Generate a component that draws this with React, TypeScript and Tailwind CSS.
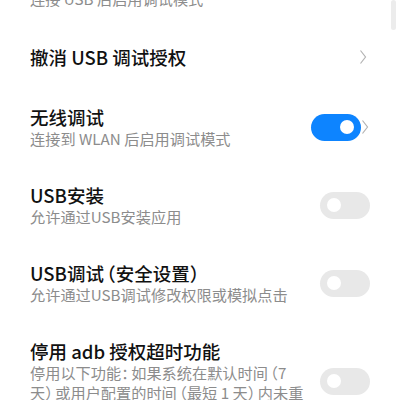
import { ReactNode } from "react"

const font = { fontFamily: '"Noto Sans CJK SC", "Noto Sans", sans-serif' }

// narrow full-width punctuation, like the phone font does
function Open({ ch }: { ch: string }) {
  return <span className="[font-feature-settings:'halt'] ml-[2.5px]">{ch}</span>
}

function Close({ ch }: { ch: string }) {
  return <span className="[font-feature-settings:'halt'] mr-[2.5px]">{ch}</span>
}

function Chevron() {
  return (
    <svg width="8" height="16" viewBox="0 0 8 16" className="shrink-0">
      <polyline points="1.5,1.5 6.5,8 1.5,14.5" fill="none" stroke="#b3b3b3" strokeWidth="1.2" />
    </svg>
  )
}

function Toggle({ on }: { on: boolean }) {
  return (
    <div
      className={
        on
          ? "w-[50px] h-[27px] rounded-full bg-[#0d84ff] flex items-center justify-end pr-[7px] shrink-0"
          : "w-[50px] h-[27px] rounded-full bg-[#e8e8e8] flex items-center justify-start pl-[7px] shrink-0"
      }
    >
      <div className="w-[14px] h-[14px] rounded-full bg-white" />
    </div>
  )
}

interface RowProps {
  title?: ReactNode
  sub?: ReactNode
  right?: ReactNode
  className?: string
}

function Row({ title, sub, right, className }: RowProps) {
  return (
    <div className={"flex items-center pl-[30px] " + (className ?? "")}>
      <div className="flex-1 min-w-0">
        {title && <div className="text-[18.5px] leading-[22px] font-medium text-[#111]">{title}</div>}
        {sub && <div className="text-[15.2px] leading-[20px] text-[#8c8c8c]">{sub}</div>}
      </div>
      {right}
    </div>
  )
}

export default function App() {
  return (
    <div className="relative w-[400px] h-[400px] overflow-hidden bg-white" style={font}>
      <div className="-mt-[52px] flex flex-col">
        <Row className="py-[18px] pr-[30px]" title="USB 调试" sub="连接 USB 后启用调试模式" />
        <Row className="py-[20px] pr-[33px]" title="撤消 USB 调试授权" right={<Chevron />} />
        <Row
          className="py-[18px] pr-[31px]"
          title="无线调试"
          sub="连接到 WLAN 后启用调试模式"
          right={
            <div className="flex items-center">
              <Toggle on={true} />
              <Chevron />
            </div>
          }
        />
        <Row className="py-[18px] pr-[30px]" title="USB安装" sub="允许通过USB安装应用" right={<Toggle on={false} />} />
        <Row
          className="py-[18px] pr-[30px]"
          title={
            <>
              USB调试<Open ch="（" />安全设置<Close ch="）" />
            </>
          }
          sub="允许通过USB调试修改权限或模拟点击"
          right={<Toggle on={false} />}
        />
        <Row
          className="py-[18px] pr-[30px]"
          title="停用 adb 授权超时功能"
          sub={
            <>
              停用以下功能<Close ch="：" />如果系统在默认时间<Open ch="（" />7
              <br />
              天<Close ch="）" />或用户配置的时间<Open ch="（" />最短 1 天<Close ch="）" />内未重
              <br />
              新连接，则自动撤消 adb 授权。
            </>
          }
          right={<Toggle on={false} />}
        />
      </div>
      <div className="absolute right-[4px] top-0 w-[5px] h-[30px] rounded-full bg-[#ececec]" />
    </div>
  )
}
